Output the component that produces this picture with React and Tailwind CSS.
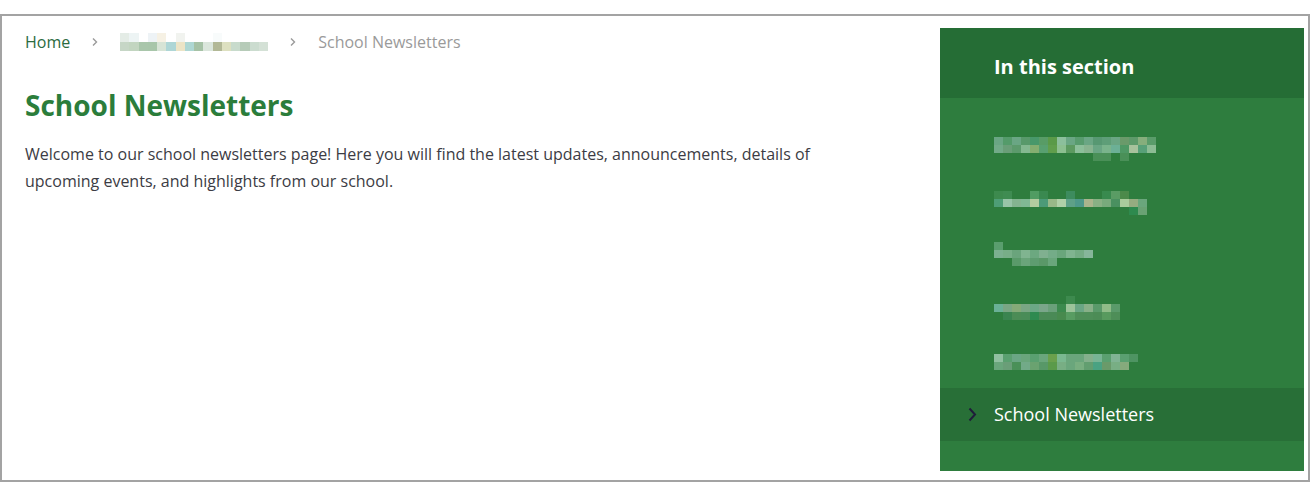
import React from "react";

const crumbBlob = [
  ["#e4ece6", "#edf4f4", "#ffffff", "#eef3f6", "#f6f1e4", "#ffffff", "#f1f3ef", "#ffffff", "#ffffff", "#ffffff", "#f8fbfb", "#ffffff", "#ffffff", "#ffffff", "#ffffff", "#ffffff"],
  ["#c6d6c6", "#c2d5c0", "#a9c6ab", "#a8c6aa", "#d7e4d6", "#aed6d6", "#ece4c6", "#aed7d3", "#a6c2a6", "#dbe6dc", "#b2b896", "#dde0c0", "#c8dbcc", "#b6cbb8", "#cbdccf", "#d4e1d6"],
];

const sideBlobs = [
  [
    ["#6aa684", "#549b6a", "#6aa684", "#58996a", "#48986a", "#589c66", "#5a9a48", "#8cbf9c", "#6aa684", "#589c6e", "#6aa684", "#579872", "#5e9e78", "#6aa684", "#6a9a6a", "#5e9a6a", "#86ae7c", "#5a9c6a"],
    ["#72aa88", "#6a9e78", "#5c9a6c", "#84b890", "#84ae70", "#58a070", "#609e4c", "#8cbf90", "#5c9a60", "#8cbf9a", "#88b490", "#6aa684", "#7ab48c", "#6cb096", "#4e9864", "#a8c29c", "#58a078", "#8cbc94"],
    ["#2e7d3e", "#2e7d3e", "#2e7d3e", "#2e7d3e", "#2e7d3e", "#2e7d3e", "#2e7d3e", "#2e7d3e", "#2e7d3e", "#2e7d3e", "#2e7d3e", "#4a9058", "#4a9058", "#2e7d3e", "#4a9058", "#2e7d3e", "#2e7d3e", "#2e7d3e"],
  ],
  [
    ["#3d8a4e", "#3f8c52", "#2e7d3e", "#2e7d3e", "#509c62", "#3a8950", "#2e7d3e", "#2e7d3e", "#3d8c5e", "#2e7d3e", "#2e7d3e", "#2e7d3e", "#388a4e", "#5a9c64", "#4c8a4a", "#2e7d3e", "#2e7d3e"],
    ["#4e9e76", "#98c4a8", "#84b490", "#80b894", "#b4cca0", "#4c9a78", "#98b888", "#b0d0a8", "#5ea088", "#4e988a", "#aab48c", "#88b084", "#78aa7c", "#4a9060", "#aacc9c", "#96ac80", "#6aa67c"],
    ["#2e7d3e", "#2e7d3e", "#2e7d3e", "#2e7d3e", "#2e7d3e", "#2e7d3e", "#2e7d3e", "#2e7d3e", "#2e7d3e", "#2e7d3e", "#2e7d3e", "#2e7d3e", "#2e7d3e", "#2e7d3e", "#2e7d3e", "#2e8a4e", "#6aa274"],
  ],
  [
    ["#5a9e6e", "#2e7d3e", "#2e7d3e", "#2e7d3e", "#2e7d3e", "#2e7d3e", "#2e7d3e", "#2e7d3e", "#2e7d3e", "#2e7d3e", "#2e7d3e"],
    ["#7cb090", "#78ae88", "#6aa47c", "#80b490", "#6ca880", "#80b090", "#74ac88", "#6aa67c", "#80b490", "#74ac84", "#86b69a"],
    ["#2e7d3e", "#2e7d3e", "#5a9a6a", "#6aa47a", "#5e9c70", "#5a9868", "#6aa67c", "#2e7d3e", "#2e7d3e", "#2e7d3e", "#2e7d3e"],
  ],
  [
    ["#2e7d3e", "#2e7d3e", "#2e7d3e", "#2e7d3e", "#2e7d3e", "#2e7d3e", "#2e7d3e", "#2e7d3e", "#3d8a4e", "#2e7d3e", "#2e7d3e", "#2e7d3e", "#2e7d3e", "#2e7d3e", "#2e7d3e"],
    ["#6ab096", "#7aa684", "#86aa78", "#7aa684", "#6ca886", "#7aa68a", "#6aa07a", "#3c8a4e", "#9cc49a", "#6aa684", "#88b088", "#5a9a6a", "#90bc88", "#5a9a6a", "#2e7d3e"],
    ["#2e7d3e", "#3a8450", "#4c8c56", "#4a8c58", "#2e8a50", "#4a8a56", "#4a8a56", "#488a4e", "#589c62", "#4e8e58", "#4e8e58", "#4c8c56", "#589a5e", "#4e8e58", "#2e7d3e"],
  ],
  [
    ["#90c0a0", "#5aa070", "#6aa684", "#6aa67c", "#5aa070", "#6aa67c", "#6aa04c", "#7ab890", "#6aa67c", "#6aa67c", "#84b08c", "#78b494", "#5aa070", "#80b494", "#5aa070", "#4e9462"],
    ["#6aa67c", "#6a9e78", "#4a9058", "#72aa88", "#6aa270", "#589868", "#5a9a4a", "#78ae84", "#6aa67c", "#78ae80", "#629e70", "#4aa282", "#6a9a6a", "#78ae84", "#86aa7c", "#2e7d3e"],
  ],
];

function Mosaic({ rows, cell = "w-[9px] h-[9px]" }) {
  return (
    <div className="flex flex-col">
      {rows.map((row, r) => (
        <div key={r} className="flex">
          {row.map((c, i) => (
            <div key={i} className={cell} style={{ backgroundColor: c }} />
          ))}
        </div>
      ))}
    </div>
  );
}

function Sep() {
  return (
    <svg width="8" height="10" viewBox="0 0 8 10" className="mx-[21px]">
      <path d="M2 1.5 L5.5 5 L2 8.5" fill="none" stroke="#9a9a9a" strokeWidth="1.4" />
    </svg>
  );
}

export default function App() {
  return (
    <div className="bg-white h-[482px] w-[1311px] pt-[14px]" style={{ fontFamily: '"Open Sans", "Noto Sans", sans-serif' }}>
      <div className="flex w-[1310px] h-[468px] border-2 border-[#a3a3a3]">
        {/* main column */}
        <main className="flex-1 pl-[23px] pt-[15px]">
          <nav className="flex items-center h-[22px] text-[16px]">
            <span className="text-[#2b6b3f]">Home</span>
            <Sep />
            <div className="mt-[-1px]">
              <Mosaic rows={crumbBlob} cell="w-[9.25px] h-[9px]" />
            </div>
            <Sep />
            <span className="text-[#9a9a9a]">School Newsletters</span>
          </nav>

          <h1 className="mt-[34px] text-[28px] leading-[36px] font-bold text-[#2b7d3b]">
            School Newsletters
          </h1>

          <p className="mt-[18px] max-w-[830px] text-[16px] leading-[27px] text-[#3c3c44]">
            Welcome to our school newsletters page! Here you will find the latest updates, announcements, details of upcoming events, and highlights from our school.
          </p>
        </main>

        {/* sidebar */}
        <aside className="w-[364px] h-[443px] mt-[12px] mr-[4px] bg-[#2e7d3e] flex flex-col">
          <div className="h-[70px] bg-[#256d35] pt-[25px] pl-[54px]">
            <h2 className="text-[20px] leading-[28px] font-bold text-white">In this section</h2>
          </div>
          <ul className="pt-[20px]">
            {sideBlobs.map((b, i) => (
              <li key={i} className="h-[54px] flex items-center pl-[54px]">
                <div className={i === 0 || i === 1 ? "mt-[8px]" : "mt-[2px]"}>
                  <Mosaic rows={b} cell="w-[9px] h-[8px]" />
                </div>
              </li>
            ))}
            <li className="h-[53px] flex items-center bg-[#286f37] pl-[27px]">
              <svg width="11" height="15" viewBox="0 0 11 15" className="mr-[16px]">
                <path d="M2.5 1.5 L8 7.5 L2.5 13.5" fill="none" stroke="#1f1d3a" strokeWidth="2" />
              </svg>
              <span className="text-[18px] text-white">School Newsletters</span>
            </li>
          </ul>
        </aside>
      </div>
    </div>
  );
}
